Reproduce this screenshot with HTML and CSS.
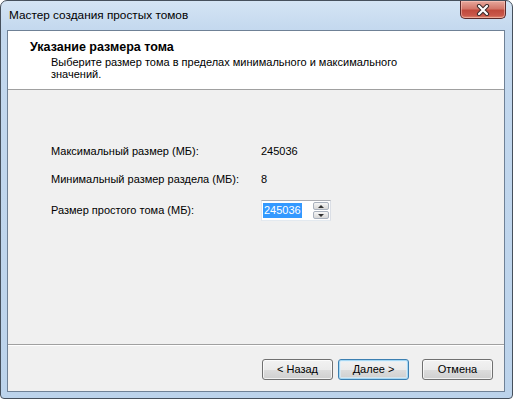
FILE: index.html
```html
<!DOCTYPE html>
<html lang="ru">
<head>
<meta charset="utf-8">
<title>Мастер создания простых томов</title>
<link rel="stylesheet" href="styles.css">
</head>
<body>
<div class="window">
  <div class="titlebar">
    <span class="title">Мастер создания простых томов</span>
    <div class="close">
      <svg width="14" height="12" viewBox="0 0 14 12">
        <path d="M3 2 L11 10 M11 2 L3 10" stroke="#3b2a2a" stroke-width="4.2" stroke-linecap="round" fill="none"/>
        <path d="M3 2 L11 10 M11 2 L3 10" stroke="#ffffff" stroke-width="2.2" stroke-linecap="round" fill="none"/>
      </svg>
    </div>
  </div>
  <div class="client">
    <div class="header">
      <div class="h-title">Указание размера тома</div>
      <div class="h-sub">Выберите размер тома в пределах минимального и максимального значений.</div>
    </div>
    <div class="body">
      <div class="grid">
        <div class="label">Максимальный размер (МБ):</div>
        <div class="value">245036</div>
        <div class="label">Минимальный размер раздела (МБ):</div>
        <div class="value">8</div>
        <div class="label">Размер простого тома (МБ):</div>
        <div class="spin">
          <div class="spin-field"><span class="sel">245036</span></div>
          <div class="spin-btns">
            <div class="sbtn"><span class="arr up"></span></div>
            <div class="sbtn"><span class="arr down"></span></div>
          </div>
        </div>
      </div>
    </div>
    <div class="footer">
      <div class="btn">&lt; Назад</div>
      <div class="btn default">Далее &gt;</div>
      <div class="btn cancel">Отмена</div>
    </div>
  </div>
</div>
</body>
</html>
```
FILE: styles.css
```css
html, body {
  margin: 0;
  padding: 0;
  background: #ffffff;
}
body {
  width: 513px;
  height: 399px;
  font-family: "Liberation Sans", Arial, sans-serif;
  font-size: 11px;
  color: #000;
}
.window {
  box-sizing: border-box;
  width: 513px;
  height: 399px;
  border: 1px solid #46505c;
  border-radius: 7px 7px 4px 4px;
  background: linear-gradient(180deg, #d4e4f4 0px, #c3d8ee 30px, #bcd3eb 100%);
  padding: 0 7px 6px 6px;
  display: flex;
  flex-direction: column;
}
.titlebar {
  height: 29px;
  display: flex;
  justify-content: space-between;
  align-items: flex-start;
}
.title {
  margin-left: 2px;
  margin-top: 7px;
  line-height: 15px;
  font-size: 11.8px;
  color: #000;
}
.close {
  width: 44px;
  height: 17px;
  margin-right: -1px;
  border: 1px solid #5b2a2a;
  border-top: none;
  border-radius: 0 0 5px 5px;
  background: linear-gradient(180deg, #e7a89c 0%, #d3776a 45%, #c04a3c 55%, #c9584a 85%, #e08a70 100%);
  box-shadow: inset 0 0 0 1px rgba(255, 210, 200, 0.5);
  display: flex;
  align-items: center;
  justify-content: center;
}
.close svg {
  display: block;
}
.client {
  flex: 1;
  border: 1px solid #6f8196;
  background: #f0f0f0;
  display: flex;
  flex-direction: column;
}
.header {
  height: 58px;
  background: #ffffff;
  border-bottom: 1px solid #a0a0a0;
  box-sizing: content-box;
  padding: 0 0 0 22px;
}
.h-title {
  font-weight: bold;
  font-size: 12.5px;
  margin-top: 9px;
  line-height: 15px;
}
.h-sub {
  margin-left: 21px;
  margin-top: 1px;
  line-height: 12px;
  width: 360px;
}
.body {
  flex: 1;
  border-bottom: 1px solid #a0a0a0;
  box-shadow: 0 1px 0 #ffffff;
  padding: 54px 0 0 43px;
}
.grid {
  display: grid;
  grid-template-columns: 210px auto;
  grid-auto-rows: auto;
  row-gap: 13px;
  align-items: center;
}
.label, .value {
  line-height: 15px;
}
.spin {
  display: flex;
  width: 70px;
  height: 21px;
  box-sizing: border-box;
  border: 1px solid #abadb3;
  border-color: #abadb3 #dbdfe6 #e3e9ef #e2e3ea;
  background: #fff;
}
.spin-field {
  flex: 1;
  display: flex;
  align-items: center;
  padding-left: 1px;
}
.sel {
  background: #3399ff;
  color: #fff;
  line-height: 15px;
  padding: 0 1px 0 1px;
}
.spin-btns {
  width: 16px;
  display: flex;
  flex-direction: column;
  justify-content: space-between;
  padding: 1px 1px 1px 0;
}
.sbtn {
  height: 8px;
  box-sizing: border-box;
  border: 1px solid #a9b1bd;
  border-radius: 2px;
  background: linear-gradient(180deg, #f6f6f6 0%, #e6e6e6 50%, #d8d8d8 100%);
  display: flex;
  align-items: center;
  justify-content: center;
}
.arr {
  width: 0;
  height: 0;
  border-left: 3px solid transparent;
  border-right: 3px solid transparent;
}
.arr.up {
  border-bottom: 3px solid #333;
}
.arr.down {
  border-top: 3px solid #333;
}
.footer {
  height: 46px;
  display: flex;
  justify-content: flex-end;
  align-items: flex-start;
  padding-right: 11px;
  box-sizing: border-box;
  padding-top: 14px;
}
.btn {
  width: 71px;
  height: 21px;
  box-sizing: border-box;
  border: 1px solid #707070;
  border-radius: 3px;
  background: linear-gradient(180deg, #f2f2f2 0%, #ebebeb 50%, #dddddd 51%, #cfcfcf 100%);
  box-shadow: inset 0 0 0 1px rgba(255, 255, 255, 0.7);
  display: flex;
  align-items: center;
  justify-content: center;
  line-height: 15px;
  margin-left: 5px;
}
.btn.default {
  border-color: #3c7fb1;
  box-shadow: inset 0 0 0 1px #a6d8f4, inset 0 0 0 2px rgba(220, 240, 252, 0.6);
}
.btn.cancel {
  margin-left: 13px;
}
```
